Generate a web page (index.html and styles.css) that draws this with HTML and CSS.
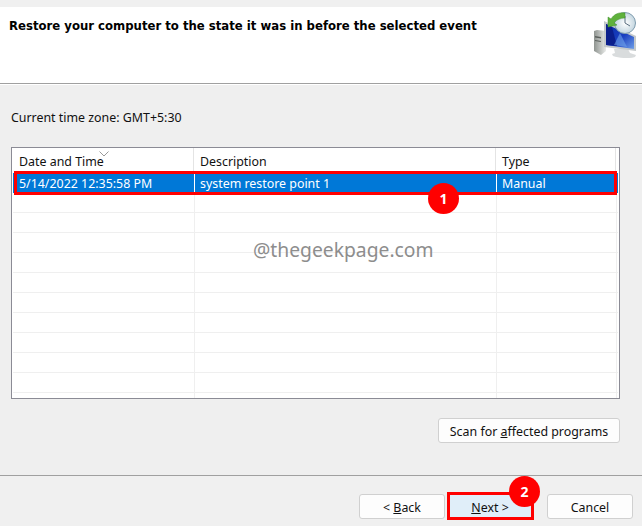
FILE: index.html
```html
<!DOCTYPE html>
<html lang="en">
<head>
<meta charset="utf-8">
<title>System Restore</title>
<link rel="stylesheet" href="styles.css">
</head>
<body>
<div class="wizard">
  <header class="head">
    <h1 class="title">Restore your computer to the state it was in before the selected event</h1>
    <svg class="logo" width="46" height="46" viewBox="0 0 46 46" aria-hidden="true">
      <defs>
        <linearGradient id="scr" x1="0" y1="0" x2="1" y2="1"><stop offset="0" stop-color="#0a2fa8"/><stop offset="0.55" stop-color="#1a3fc0"/><stop offset="1" stop-color="#6f9fe8"/></linearGradient>
        <linearGradient id="tower" x1="0" y1="0" x2="1" y2="0"><stop offset="0" stop-color="#8f9490"/><stop offset="1" stop-color="#e8eae8"/></linearGradient>
        <radialGradient id="face"><stop offset="0" stop-color="#ffffff"/><stop offset="1" stop-color="#c4d6e0"/></radialGradient>
      </defs>
      <path d="M2 19l3-1 9 1v20l-5 4-7-4z" fill="url(#tower)"/>
      <path d="M3 24l6 1v1.500l-6-1zM3 28l6 1v1l-6-1z" fill="#5a5f5c"/>
      <path d="M22 37l14 0 2 4 6 2-1 2c-7 2-16 1-22-1l-1-2 3-1z" fill="#d9dcdd"/>
      <path d="M12 9l32 15 0 15-32-4z" fill="#c4c9cb"/>
      <path d="M14 12l28 13v12l-28-4z" fill="url(#scr)"/>
      <path d="M14 12l6 3 5 19-11-1z" fill="#0b1f8c"/>
      <path d="M22 33l6-12 7 14z" fill="#6fa4ea" opacity="0.6"/>
      <circle cx="33" cy="11" r="10.500" fill="url(#face)" stroke="#7f9cae" stroke-width="1"/>
      <path d="M33 4v7l5 3" fill="none" stroke="#5b6f80" stroke-width="1"/>
      <path d="M33 1c-6-1-11 1-14 6l-3-2 0 10 9-2-3-2c2-3 6-5 11-5z" fill="#5fb13c" stroke="#3f8f2a" stroke-width="0.500"/>
    </svg>
  </header>
  <main class="body">
    <p class="zone">Current time zone: GMT+5:30</p>
    <div class="list">
      <div class="row hdr">
        <div class="cell">Date and Time</div>
        <div class="cell">Description</div>
        <div class="cell">Type</div>
        <svg class="caret" width="10" height="6" viewBox="0 0 10 6" aria-hidden="true"><path d="M.5.5l4.500 4.500L9.500.5" fill="none" stroke="#9a9a9a"/></svg>
      </div>
      <div class="row sel">
        <div class="cell">5/14/2022 12:35:58 PM</div>
        <div class="cell">system restore point 1</div>
        <div class="cell">Manual</div>
      </div>
      <div class="row"><div class="cell"></div><div class="cell"></div><div class="cell"></div></div>
      <div class="row"><div class="cell"></div><div class="cell"></div><div class="cell"></div></div>
      <div class="row"><div class="cell"></div><div class="cell"></div><div class="cell"></div></div>
      <div class="row"><div class="cell"></div><div class="cell"></div><div class="cell"></div></div>
      <div class="row"><div class="cell"></div><div class="cell"></div><div class="cell"></div></div>
      <div class="row"><div class="cell"></div><div class="cell"></div><div class="cell"></div></div>
      <div class="row"><div class="cell"></div><div class="cell"></div><div class="cell"></div></div>
      <div class="row"><div class="cell"></div><div class="cell"></div><div class="cell"></div></div>
      <div class="row"><div class="cell"></div><div class="cell"></div><div class="cell"></div></div>
      <div class="row"><div class="cell"></div><div class="cell"></div><div class="cell"></div></div>
      <div class="row"><div class="cell"></div><div class="cell"></div><div class="cell"></div></div>
    </div>
    <div class="scan-row">
      <button class="btn scan" type="button">Scan for <u>a</u>ffected programs</button>
    </div>
  </main>
  <footer class="foot">
    <button class="btn nav" type="button">&lt; <u>B</u>ack</button>
    <button class="btn nav next" type="button"><u>N</u>ext &gt;</button>
    <button class="btn nav cancel" type="button">Cancel</button>
  </footer>
  <div class="mark-row"></div>
  <div class="mark-next"></div>
  <div class="badge b1">1</div>
  <div class="badge b2">2</div>
  <div class="watermark">@thegeekpage.com</div>
</div>
</body>
</html>
```

FILE: styles.css
```css
html, body {
  margin: 0;
  padding: 0;
}
body {
  background: #f0f0f0;
  font-family: "Noto Sans", "Open Sans", sans-serif;
  font-size: 12.4px;
  color: #111;
}
.wizard {
  position: relative;
  width: 642px;
  height: 526px;
  overflow: hidden;
  padding-top: 7px;
  box-sizing: border-box;
}
.head {
  height: 76px;
  background: #fff;
  border-bottom: 1px solid #a0a0a0;
  display: flex;
  justify-content: space-between;
  align-items: flex-start;
  padding: 0 4px 0 9px;
}
.title {
  margin: 10px 0 0;
  font-family: "DejaVu Sans", sans-serif;
  font-size: 11.7px;
  line-height: 18px;
  font-weight: 700;
  color: #000;
}
.logo {
  margin-top: 5px;
}
.body {
  height: 392px;
  box-sizing: border-box;
  background: #efefef;
  border-top: 1px solid #fff;
  padding: 24px 22px 0 11px;
  border-bottom: 1px solid #a0a0a0;
}
.zone {
  margin: 0 0 21px;
  line-height: 17px;
}
.list {
  width: 609px;
  height: 252px;
  box-sizing: border-box;
  background: #fff;
  border: 1px solid #8b8b95;
  overflow: hidden;
  padding: 0 1px;
}
.row {
  display: grid;
  grid-template-columns: 182px 302px 120px;
  height: 20px;
  box-sizing: border-box;
  border-bottom: 1px solid #efefef;
}
.cell {
  border-right: 1px solid #efefef;
  padding-left: 5px;
  line-height: 19px;
  white-space: nowrap;
}
.cell:first-child {
  padding-left: 6px;
}
.hdr {
  position: relative;
  height: 25px;
  border-bottom: 0;
}
.hdr .cell {
  padding-top: 4px;
  margin-right: 1px;
  border-right-color: #e4e4e4;
  line-height: 19px;
}
.caret {
  position: absolute;
  left: 86px;
  top: 3px;
}
.sel {
  background: #0078d7;
  color: #fff;
  border-bottom-color: #0078d7;
}
.sel .cell {
  border-right-color: #fff;
  line-height: 21px;
}
.scan-row {
  display: flex;
  justify-content: flex-end;
  margin-top: 19px;
}
.btn {
  box-sizing: border-box;
  height: 25px;
  margin: 0;
  padding: 1px 0 0;
  background: #fdfdfd;
  border: 1px solid #d0d0d0;
  border-radius: 3px;
  font: inherit;
  color: #111;
}
.scan {
  width: 182px;
}
.foot {
  display: flex;
  justify-content: flex-end;
  gap: 2px;
  padding: 18px 9px 0 0;
}
.nav {
  width: 86px;
}
.next {
  background: #e0eef9;
  border-color: #e0eef9;
  margin-right: 12px;
}
.mark-row {
  position: absolute;
  left: 14px;
  top: 171px;
  width: 603px;
  height: 24px;
  box-sizing: border-box;
  border: 3px solid #f00;
}
.mark-next {
  position: absolute;
  left: 447px;
  top: 492px;
  width: 87px;
  height: 28px;
  box-sizing: border-box;
  border: 3px solid #f00;
}
.badge {
  position: absolute;
  width: 31px;
  height: 31px;
  border-radius: 50%;
  background: #f00;
  color: #fff;
  font-weight: 700;
  font-size: 14px;
  line-height: 31px;
  text-align: center;
}
.b1 {
  left: 428px;
  top: 183px;
}
.b2 {
  left: 509px;
  top: 476px;
}
.watermark {
  position: absolute;
  left: 253px;
  top: 238px;
  font-size: 19.3px;
  line-height: 24px;
  color: #8d8d8d;
}
```
